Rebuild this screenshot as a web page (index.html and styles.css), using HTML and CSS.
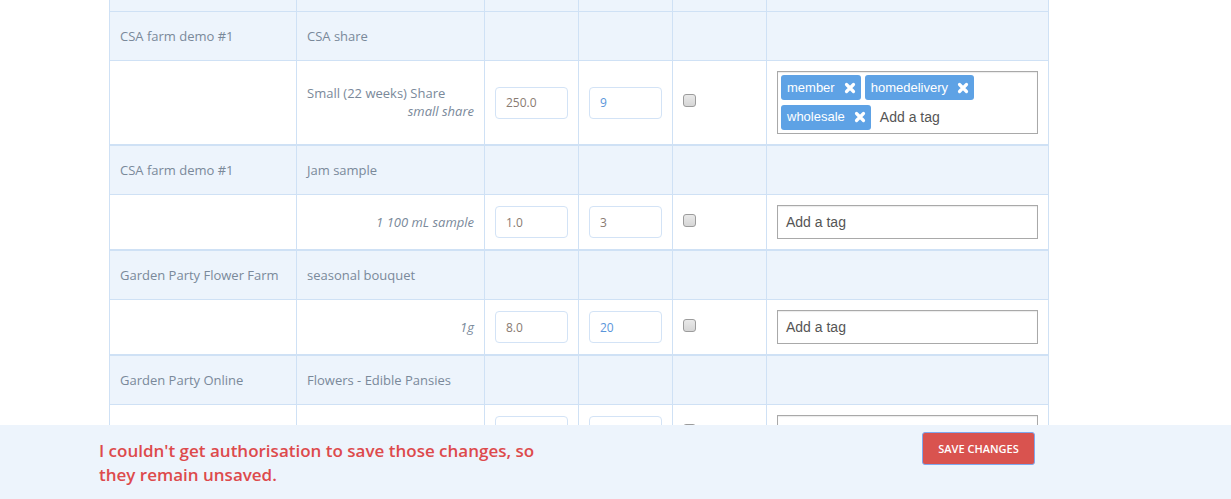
FILE: index.html
```html
<!DOCTYPE html>
<html lang="en">
<head>
<meta charset="utf-8">
<title>Variant overrides</title>
<link rel="stylesheet" href="styles.css">
</head>
<body>
<main class="page">
  <table class="overrides">
    <colgroup>
      <col class="c-producer">
      <col class="c-product">
      <col class="c-price">
      <col class="c-stock">
      <col class="c-demand">
      <col class="c-tags">
    </colgroup>
    <thead>
      <tr class="head-tail"><th></th><th></th><th></th><th></th><th></th><th></th></tr>
    </thead>
    <tbody class="product first">
      <tr class="product-row">
        <td>CSA farm demo #1</td><td>CSA share</td><td></td><td></td><td></td><td></td>
      </tr>
      <tr class="variant-row">
        <td></td>
        <td class="vname"><div class="name">Small (22 weeks) Share</div><div class="unit">small share</div></td>
        <td><input class="num" type="text" value="250.0"></td>
        <td><input class="num changed" type="text" value="9"></td>
        <td><span class="check"></span></td>
        <td>
          <div class="tags">
            <span class="tag">member<svg class="x" viewBox="0 0 12 12"><path d="M2.5 2.5 9.5 9.5M9.5 2.5 2.5 9.5"/></svg></span><span class="tag">homedelivery<svg class="x" viewBox="0 0 12 12"><path d="M2.5 2.5 9.5 9.5M9.5 2.5 2.5 9.5"/></svg></span><span class="tag">wholesale<svg class="x" viewBox="0 0 12 12"><path d="M2.5 2.5 9.5 9.5M9.5 2.5 2.5 9.5"/></svg></span><span class="tag-input">Add a tag</span>
          </div>
        </td>
      </tr>
    </tbody>
    <tbody class="product">
      <tr class="product-row">
        <td>CSA farm demo #1</td><td>Jam sample</td><td></td><td></td><td></td><td></td>
      </tr>
      <tr class="variant-row">
        <td></td>
        <td class="vname"><div class="unit">1 100 mL sample</div></td>
        <td><input class="num" type="text" value="1.0"></td>
        <td><input class="num" type="text" value="3"></td>
        <td><span class="check"></span></td>
        <td><div class="tags"><span class="tag-input">Add a tag</span></div></td>
      </tr>
    </tbody>
    <tbody class="product">
      <tr class="product-row">
        <td>Garden Party Flower Farm</td><td>seasonal bouquet</td><td></td><td></td><td></td><td></td>
      </tr>
      <tr class="variant-row">
        <td></td>
        <td class="vname"><div class="unit">1g</div></td>
        <td><input class="num" type="text" value="8.0"></td>
        <td><input class="num changed" type="text" value="20"></td>
        <td><span class="check"></span></td>
        <td><div class="tags"><span class="tag-input">Add a tag</span></div></td>
      </tr>
    </tbody>
    <tbody class="product">
      <tr class="product-row">
        <td>Garden Party Online</td><td>Flowers - Edible Pansies</td><td></td><td></td><td></td><td></td>
      </tr>
      <tr class="variant-row">
        <td></td>
        <td class="vname"></td>
        <td><input class="num" type="text" value=""></td>
        <td><input class="num" type="text" value=""></td>
        <td><span class="check"></span></td>
        <td><div class="tags"></div></td>
      </tr>
    </tbody>
  </table>
</main>
<footer class="save-bar">
  <div class="save-inner">
    <p class="save-msg">I couldn't get authorisation to save those changes, so they remain unsaved.</p>
    <button class="save-btn" type="button">SAVE CHANGES</button>
  </div>
</footer>
</body>
</html>
```
FILE: styles.css
```css
html, body {
  margin: 0;
  padding: 0;
  background: #ffffff;
}
body {
  font-family: "Open Sans", "Liberation Sans", sans-serif;
  font-size: 13px;
  color: #7a899a;
}
.page {
  padding-left: 109px;
  padding-bottom: 120px;
}
.overrides {
  width: 940px;
  table-layout: fixed;
  border-collapse: separate;
  border-spacing: 0;
  border-left: 1px solid #cfe1f5;
}
.c-producer { width: 187px; }
.c-product { width: 188px; }
.c-price, .c-stock, .c-demand { width: 94px; }
.c-tags { width: 282px; }

.overrides th,
.overrides td {
  border-right: 1px solid #cfe1f5;
  border-bottom: 1px solid #cfe1f5;
  padding: 0 10px;
  text-align: left;
  font-weight: 400;
  line-height: 18px;
}
.head-tail th {
  height: 11px;
  padding: 0;
  background: #edf4fc;
}
.product-row td {
  background: #edf4fc;
  padding: 15px 10px;
  height: 18px;
}
.product:not(.first) .product-row td {
  border-top: 1px solid #cfe1f5;
}
.variant-row td {
  background: #ffffff;
  padding: 10px 10px;
  vertical-align: middle;
}
.vname .name {
  text-align: left;
  margin-top: -1px;
}
.vname .unit {
  text-align: right;
  font-style: italic;
}
.num {
  box-sizing: border-box;
  display: block;
  width: 100%;
  height: 32px;
  margin: 0;
  padding: 0 10px;
  border: 1px solid #d3e3f6;
  border-radius: 4px;
  background: #fff;
  font-family: "Open Sans", "Liberation Sans", sans-serif;
  font-size: 12px;
  color: #8a7b72;
  outline: none;
}
.num.changed {
  color: #5a95da;
}
.check {
  display: block;
  box-sizing: border-box;
  width: 13px;
  height: 13px;
  margin: 0 0 4px 0;
  border: 1px solid #9c9c9c;
  border-radius: 3px;
  background: linear-gradient(#e9e9e9, #d6d6d6);
}
.tags {
  box-sizing: border-box;
  display: flex;
  flex-wrap: wrap;
  align-items: center;
  min-height: 34px;
  padding: 1px;
  border: 1px solid #a9a9a9;
  box-shadow: inset 0 1px 1px rgba(0,0,0,0.08);
  background: #fff;
  font-family: "Liberation Sans", Arial, sans-serif;
}
.tag {
  display: inline-flex;
  align-items: center;
  height: 25px;
  margin: 2px 2px 2px 2px;
  padding: 0 5px 0 6px;
  border-radius: 3px;
  background: #5ea2e5;
  color: #ffffff;
  font-size: 13px;
}
.tag .x {
  width: 12px;
  height: 12px;
  margin-left: 9px;
  fill: none;
  stroke: #ffffff;
  stroke-width: 3.2;
  stroke-linecap: round;
}
.tag-input {
  display: inline-block;
  height: 26px;
  line-height: 26px;
  margin: 2px;
  padding-left: 5px;
  font-size: 14px;
  color: #555555;
}
.save-bar {
  position: fixed;
  left: 0;
  right: 0;
  bottom: 0;
  height: 74px;
  background: #edf4fc;
}
.save-inner {
  display: flex;
  justify-content: space-between;
  align-items: flex-start;
  width: 936px;
  padding-left: 99px;
}
.save-msg {
  width: 460px;
  margin: 14px 0 0 0;
  font-size: 17px;
  font-weight: 600;
  line-height: 24px;
  color: #dd4a4c;
}
.save-btn {
  box-sizing: border-box;
  width: 113px;
  height: 33px;
  margin-top: 7px;
  padding: 0;
  border: 1px solid #7fa8ee;
  border-radius: 3px;
  background: #d9534f;
  color: #ffffff;
  font-family: "Open Sans", "Liberation Sans", sans-serif;
  font-size: 11px;
  font-weight: 600;
}
```
